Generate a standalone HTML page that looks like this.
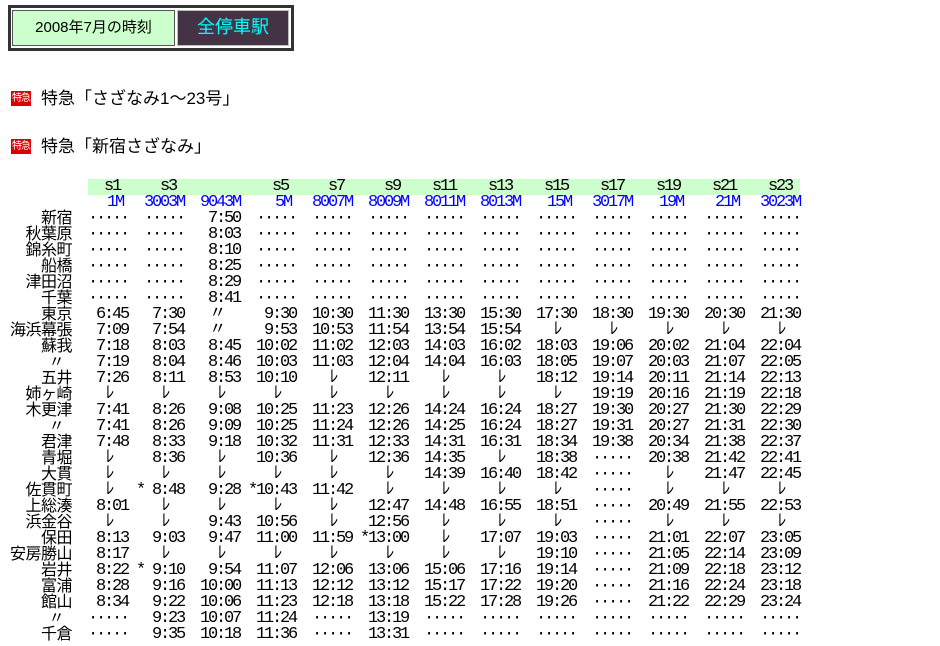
<!DOCTYPE html>
<html><head><meta charset="utf-8">
<style>
body{margin:0;width:940px;height:646px;background:#fff;position:relative;overflow:hidden;font-family:"Liberation Sans","Noto Sans CJK JP",sans-serif;color:#000}
.box{position:absolute;left:8px;top:5px;width:280px;height:40px;border:3px solid #333;}
.c1{position:absolute;left:1px;top:2px;width:161px;height:34px;background:#ccffcc;border:1px solid #555;font-size:15px;line-height:34px;text-align:center}
.c2{position:absolute;left:166px;top:2px;width:110px;height:34px;background:#443344;border:1px solid #bbb;font-size:18px;color:#00ffff;line-height:32px;text-align:center}
.ic{position:absolute;left:11px;width:20px;height:15px;background:#d00;color:#fff;font-size:10px;line-height:15px;text-align:center;letter-spacing:-1px}
.t{position:absolute;left:41px;font-size:17px;line-height:20px}
.band{position:absolute;left:88px;top:179px;width:712px;height:16px;background:#ccffcc}
.tb{position:absolute;left:8px;top:179px;font-family:"Liberation Mono","Noto Sans CJK JP",monospace;font-size:17px}
.r{display:flex;height:16px;line-height:16px;white-space:pre}
.r>i{font-style:normal;width:64px;text-align:right;font-family:"Liberation Sans","Noto Sans CJK JP",sans-serif;font-size:16px;letter-spacing:-0.5px}
.r>b{font-weight:normal;width:56px;text-align:right;letter-spacing:-2.2px}
.r>b.s{padding-right:5px;width:51px}
.m{color:#00f}
</style></head><body>
<div class="box"><div class="c1">2008年7月の時刻</div><div class="c2">全停車駅</div></div>
<div class="ic" style="top:91px">特急</div><div class="t" style="top:89px">特急「さざなみ1～23号」</div>
<div class="ic" style="top:139px">特急</div><div class="t" style="top:137px">特急「新宿さざなみ」</div>
<div class="band"></div>
<div class="tb">
<div class="r"><i></i><b>s1 </b><b>s3 </b><b></b><b>s5 </b><b>s7 </b><b>s9 </b><b>s11 </b><b>s13 </b><b>s15 </b><b>s17 </b><b>s19 </b><b>s21 </b><b>s23 </b></div>
<div class="r m"><i></i><b class="s">1M</b><b>3003M</b><b>9043M</b><b class="s">5M</b><b>8007M</b><b>8009M</b><b>8011M</b><b>8013M</b><b class="s">15M</b><b>3017M</b><b class="s">19M</b><b class="s">21M</b><b>3023M</b></div>
<div class="r"><i>新宿</i><b>·····</b><b>·····</b><b>7:50</b><b>·····</b><b>·····</b><b>·····</b><b>·····</b><b>·····</b><b>·····</b><b>·····</b><b>·····</b><b>·····</b><b>·····</b></div>
<div class="r"><i>秋葉原</i><b>·····</b><b>·····</b><b>8:03</b><b>·····</b><b>·····</b><b>·····</b><b>·····</b><b>·····</b><b>·····</b><b>·····</b><b>·····</b><b>·····</b><b>·····</b></div>
<div class="r"><i>錦糸町</i><b>·····</b><b>·····</b><b>8:10</b><b>·····</b><b>·····</b><b>·····</b><b>·····</b><b>·····</b><b>·····</b><b>·····</b><b>·····</b><b>·····</b><b>·····</b></div>
<div class="r"><i>船橋</i><b>·····</b><b>·····</b><b>8:25</b><b>·····</b><b>·····</b><b>·····</b><b>·····</b><b>·····</b><b>·····</b><b>·····</b><b>·····</b><b>·····</b><b>·····</b></div>
<div class="r"><i>津田沼</i><b>·····</b><b>·····</b><b>8:29</b><b>·····</b><b>·····</b><b>·····</b><b>·····</b><b>·····</b><b>·····</b><b>·····</b><b>·····</b><b>·····</b><b>·····</b></div>
<div class="r"><i>千葉</i><b>·····</b><b>·····</b><b>8:41</b><b>·····</b><b>·····</b><b>·····</b><b>·····</b><b>·····</b><b>·····</b><b>·····</b><b>·····</b><b>·····</b><b>·····</b></div>
<div class="r"><i>東京</i><b>6:45</b><b>7:30</b><b>〃  </b><b>9:30</b><b>10:30</b><b>11:30</b><b>13:30</b><b>15:30</b><b>17:30</b><b>18:30</b><b>19:30</b><b>20:30</b><b>21:30</b></div>
<div class="r"><i>海浜幕張</i><b>7:09</b><b>7:54</b><b>〃  </b><b>9:53</b><b>10:53</b><b>11:54</b><b>13:54</b><b>15:54</b><b>ﾚ  </b><b>ﾚ  </b><b>ﾚ  </b><b>ﾚ  </b><b>ﾚ  </b></div>
<div class="r"><i>蘇我</i><b>7:18</b><b>8:03</b><b>8:45</b><b>10:02</b><b>11:02</b><b>12:03</b><b>14:03</b><b>16:02</b><b>18:03</b><b>19:06</b><b>20:02</b><b>21:04</b><b>22:04</b></div>
<div class="r"><i>〃  </i><b>7:19</b><b>8:04</b><b>8:46</b><b>10:03</b><b>11:03</b><b>12:04</b><b>14:04</b><b>16:03</b><b>18:05</b><b>19:07</b><b>20:03</b><b>21:07</b><b>22:05</b></div>
<div class="r"><i>五井</i><b>7:26</b><b>8:11</b><b>8:53</b><b>10:10</b><b>ﾚ  </b><b>12:11</b><b>ﾚ  </b><b>ﾚ  </b><b>18:12</b><b>19:14</b><b>20:11</b><b>21:14</b><b>22:13</b></div>
<div class="r"><i>姉ヶ崎</i><b>ﾚ  </b><b>ﾚ  </b><b>ﾚ  </b><b>ﾚ  </b><b>ﾚ  </b><b>ﾚ  </b><b>ﾚ  </b><b>ﾚ  </b><b>ﾚ  </b><b>19:19</b><b>20:16</b><b>21:19</b><b>22:18</b></div>
<div class="r"><i>木更津</i><b>7:41</b><b>8:26</b><b>9:08</b><b>10:25</b><b>11:23</b><b>12:26</b><b>14:24</b><b>16:24</b><b>18:27</b><b>19:30</b><b>20:27</b><b>21:30</b><b>22:29</b></div>
<div class="r"><i>〃  </i><b>7:41</b><b>8:26</b><b>9:09</b><b>10:25</b><b>11:24</b><b>12:26</b><b>14:25</b><b>16:24</b><b>18:27</b><b>19:31</b><b>20:27</b><b>21:31</b><b>22:30</b></div>
<div class="r"><i>君津</i><b>7:48</b><b>8:33</b><b>9:18</b><b>10:32</b><b>11:31</b><b>12:33</b><b>14:31</b><b>16:31</b><b>18:34</b><b>19:38</b><b>20:34</b><b>21:38</b><b>22:37</b></div>
<div class="r"><i>青堀</i><b>ﾚ  </b><b>8:36</b><b>ﾚ  </b><b>10:36</b><b>ﾚ  </b><b>12:36</b><b>14:35</b><b>ﾚ  </b><b>18:38</b><b>·····</b><b>20:38</b><b>21:42</b><b>22:41</b></div>
<div class="r"><i>大貫</i><b>ﾚ  </b><b>ﾚ  </b><b>ﾚ  </b><b>ﾚ  </b><b>ﾚ  </b><b>ﾚ  </b><b>14:39</b><b>16:40</b><b>18:42</b><b>·····</b><b>ﾚ  </b><b>21:47</b><b>22:45</b></div>
<div class="r"><i>佐貫町</i><b>ﾚ  </b><b>* 8:48</b><b>9:28</b><b>*10:43</b><b>11:42</b><b>ﾚ  </b><b>ﾚ  </b><b>ﾚ  </b><b>ﾚ  </b><b>·····</b><b>ﾚ  </b><b>ﾚ  </b><b>ﾚ  </b></div>
<div class="r"><i>上総湊</i><b>8:01</b><b>ﾚ  </b><b>ﾚ  </b><b>ﾚ  </b><b>ﾚ  </b><b>12:47</b><b>14:48</b><b>16:55</b><b>18:51</b><b>·····</b><b>20:49</b><b>21:55</b><b>22:53</b></div>
<div class="r"><i>浜金谷</i><b>ﾚ  </b><b>ﾚ  </b><b>9:43</b><b>10:56</b><b>ﾚ  </b><b>12:56</b><b>ﾚ  </b><b>ﾚ  </b><b>ﾚ  </b><b>·····</b><b>ﾚ  </b><b>ﾚ  </b><b>ﾚ  </b></div>
<div class="r"><i>保田</i><b>8:13</b><b>9:03</b><b>9:47</b><b>11:00</b><b>11:59</b><b>*13:00</b><b>ﾚ  </b><b>17:07</b><b>19:03</b><b>·····</b><b>21:01</b><b>22:07</b><b>23:05</b></div>
<div class="r"><i>安房勝山</i><b>8:17</b><b>ﾚ  </b><b>ﾚ  </b><b>ﾚ  </b><b>ﾚ  </b><b>ﾚ  </b><b>ﾚ  </b><b>ﾚ  </b><b>19:10</b><b>·····</b><b>21:05</b><b>22:14</b><b>23:09</b></div>
<div class="r"><i>岩井</i><b>8:22</b><b>* 9:10</b><b>9:54</b><b>11:07</b><b>12:06</b><b>13:06</b><b>15:06</b><b>17:16</b><b>19:14</b><b>·····</b><b>21:09</b><b>22:18</b><b>23:12</b></div>
<div class="r"><i>富浦</i><b>8:28</b><b>9:16</b><b>10:00</b><b>11:13</b><b>12:12</b><b>13:12</b><b>15:17</b><b>17:22</b><b>19:20</b><b>·····</b><b>21:16</b><b>22:24</b><b>23:18</b></div>
<div class="r"><i>館山</i><b>8:34</b><b>9:22</b><b>10:06</b><b>11:23</b><b>12:18</b><b>13:18</b><b>15:22</b><b>17:28</b><b>19:26</b><b>·····</b><b>21:22</b><b>22:29</b><b>23:24</b></div>
<div class="r"><i>〃  </i><b>·····</b><b>9:23</b><b>10:07</b><b>11:24</b><b>·····</b><b>13:19</b><b>·····</b><b>·····</b><b>·····</b><b>·····</b><b>·····</b><b>·····</b><b>·····</b></div>
<div class="r"><i>千倉</i><b>·····</b><b>9:35</b><b>10:18</b><b>11:36</b><b>·····</b><b>13:31</b><b>·····</b><b>·····</b><b>·····</b><b>·····</b><b>·····</b><b>·····</b><b>·····</b></div>
</div>
</body></html>
